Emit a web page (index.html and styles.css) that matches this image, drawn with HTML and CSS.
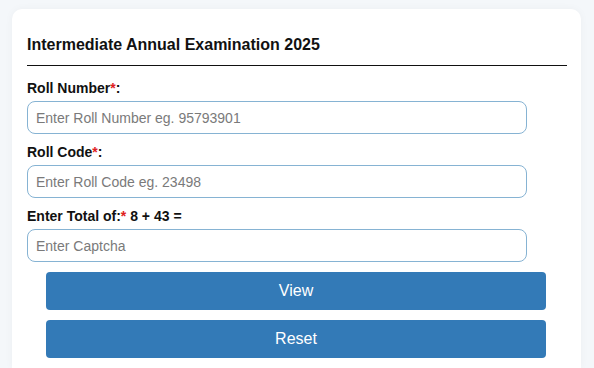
FILE: index.html
```html
<!DOCTYPE html>
<html lang="en">
<head>
<meta charset="utf-8">
<title>Intermediate Annual Examination 2025</title>
<link rel="stylesheet" href="styles.css">
</head>
<body>
<div class="card">
  <h2 class="title">Intermediate Annual Examination 2025</h2>
  <form class="form">
    <label class="label" for="roll">Roll Number<span class="req">*</span>:</label>
    <input class="input" id="roll" type="text" placeholder="Enter Roll Number eg. 95793901">
    <label class="label" for="code">Roll Code<span class="req">*</span>:</label>
    <input class="input" id="code" type="text" placeholder="Enter Roll Code eg. 23498">
    <label class="label" for="cap">Enter Total of:<span class="req">*</span> 8 + 43 =</label>
    <input class="input" id="cap" type="text" placeholder="Enter Captcha">
    <div class="actions">
      <button class="btn" type="button">View</button>
      <button class="btn" type="reset">Reset</button>
    </div>
  </form>
</div>
</body>
</html>
```

FILE: styles.css
```css
html, body {
  margin: 0;
  padding: 0;
}
body {
  background: #f4f7fa;
  font-family: "Liberation Sans", Arial, sans-serif;
  color: #111;
  height: 368px;
  overflow: hidden;
}
.card {
  margin: 9px 0 0 12px;
  width: 569px;
  height: 359px;
  box-sizing: border-box;
  background: #fff;
  border-radius: 10px 10px 0 0;
  box-shadow: 0 0 8px rgba(0, 0, 0, 0.04);
  padding: 26px 14px 0 15px;
}
.title {
  margin: 0;
  font-size: 16px;
  line-height: 20px;
  font-weight: bold;
  padding-bottom: 10px;
  border-bottom: 1px solid #111;
}
.form {
  display: flex;
  flex-direction: column;
  align-items: flex-start;
  padding-top: 12px;
}
.label {
  font-size: 14px;
  line-height: 20px;
  font-weight: bold;
  margin-bottom: 3px;
}
.req {
  color: #e02020;
}
.input {
  width: 500px;
  height: 33px;
  box-sizing: border-box;
  border: 1px solid #86b3d3;
  border-radius: 8px;
  padding: 0 8px;
  font-family: "Liberation Sans", Arial, sans-serif;
  font-size: 14px;
  color: #333;
  margin: 0 0 8px 0;
  outline: none;
}
.input::placeholder {
  color: #7a7a7a;
}
.actions {
  display: flex;
  flex-direction: column;
  gap: 10px;
  padding-left: 19px;
  margin-top: 2px;
}
.btn {
  width: 500px;
  height: 38px;
  border: none;
  border-radius: 4px;
  background: #337ab7;
  color: #fff;
  font-family: "Liberation Sans", Arial, sans-serif;
  font-size: 16px;
  cursor: pointer;
}
```
